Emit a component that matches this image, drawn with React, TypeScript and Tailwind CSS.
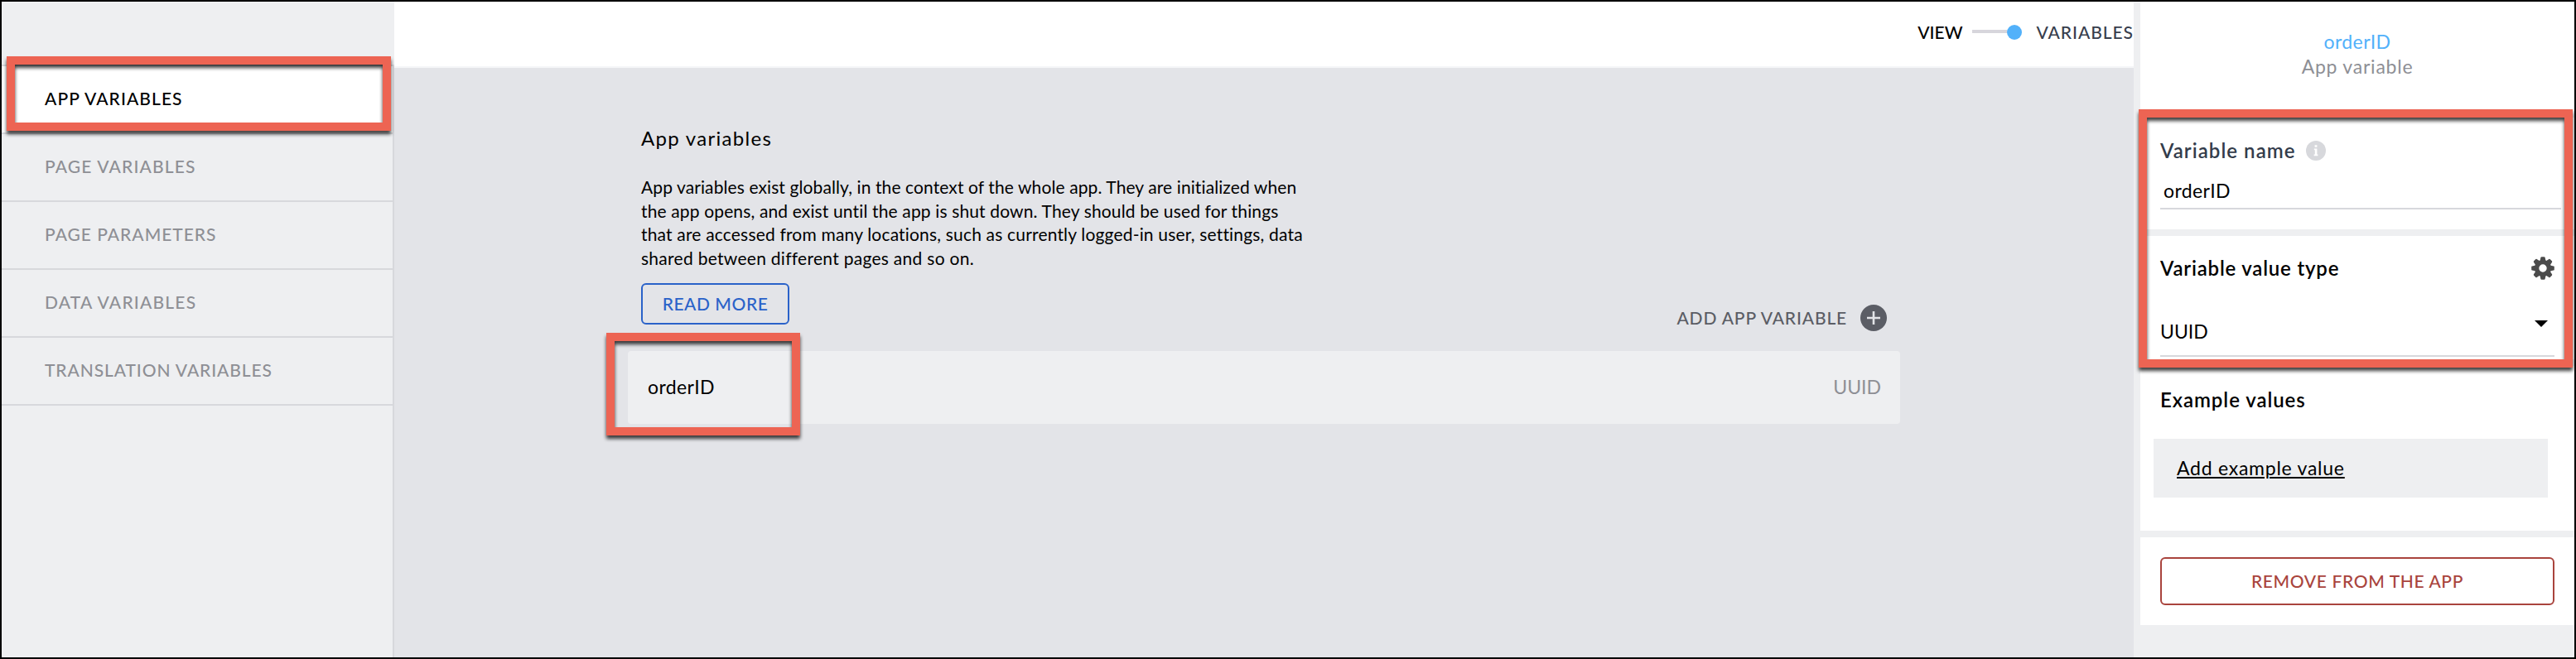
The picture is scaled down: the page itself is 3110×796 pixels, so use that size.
type NavItem = { label: string; tracking: string; active?: boolean };

const navItems: NavItem[] = [
  { label: "APP VARIABLES", tracking: "tracking-[1.07px]", active: true },
  { label: "PAGE VARIABLES", tracking: "tracking-[1.15px]" },
  { label: "PAGE PARAMETERS", tracking: "tracking-[0.98px]" },
  { label: "DATA VARIABLES", tracking: "tracking-[1.2px]" },
  { label: "TRANSLATION VARIABLES", tracking: "tracking-[0.9px]" },
];

function Highlight({ className }: { className: string }) {
  return (
    <div
      className={`pointer-events-none absolute border-[10px] border-[#ed6453] [filter:drop-shadow(0_4px_2px_rgba(0,0,0,0.75))] ${className}`}
    />
  );
}

function Sidebar() {
  return (
    <nav className="flex w-[474px] shrink-0 flex-col bg-[#eeeff1]">
      <div className="h-[76px] shrink-0" />
      <div className="flex flex-1 flex-col border-r-2 border-t-2 border-[#d7d8dc]">
        {navItems.map((item) => (
          <div
            key={item.label}
            className={`flex h-[82px] shrink-0 items-center border-b-2 border-[#d7d8dc] pb-[2px] pl-[52px] text-[21px] font-medium ${item.tracking} ${
              item.active ? "bg-white text-black" : "text-[#8e8f95]"
            }`}
          >
            {item.label}
          </div>
        ))}
      </div>
    </nav>
  );
}

function ViewSwitch() {
  return (
    <header className="flex h-20 shrink-0 items-center justify-end border-b-2 border-[#f5f6f8] bg-white pb-1 text-[21px] font-medium leading-[28px]">
      <span className="text-black">VIEW</span>
      <span className="ml-[12px] flex items-center">
        <span className="-mt-[2px] h-1 w-[42px] bg-[#d7d6dc]" />
        <span className="size-[18px] rounded-full bg-[#52b1fa]" />
      </span>
      <span className="ml-[17px] tracking-[0.95px] text-[#383e4d]">VARIABLES</span>
    </header>
  );
}

function PlusCircle() {
  return (
    <svg className="size-8" viewBox="0 0 32 32" fill="none">
      <circle cx="16" cy="16" r="16" fill="#5b5d65" />
      <path d="M16 8v16M8 16h16" stroke="#e3e4e8" strokeWidth="2.6" />
    </svg>
  );
}

function Gear() {
  const teeth = [0, 45, 90, 135, 180, 225, 270, 315];
  return (
    <svg className="size-7" viewBox="0 0 28 28" fill="none">
      <circle cx="14" cy="14" r="7.4" stroke="#4b4b4b" strokeWidth="5.4" />
      {teeth.map((angle) => (
        <path
          key={angle}
          d="M10.4 5.5 11.4 1Q11.6 .2 12.4 .2H15.6Q16.4 .2 16.6 1L17.6 5.5Z"
          fill="#4b4b4b"
          transform={`rotate(${angle} 14 14)`}
        />
      ))}
    </svg>
  );
}

function InfoDot() {
  return (
    <svg className="size-6" viewBox="0 0 24 24">
      <circle cx="12" cy="12" r="12" fill="#d7d8dc" />
      <path d="M10.6 5.2h2.8v2.6h-2.8zM9.8 9.6h3.6v7h1v1.6H9.6v-1.6h1.2v-5.4h-1z" fill="#fff" />
    </svg>
  );
}

function Content() {
  return (
    <main className="flex flex-1 flex-col bg-[#e3e4e8] pl-[282px] pt-[71px] text-black">
      <div className="flex w-[1536px] flex-col">
        <div className="flex flex-col px-4">
          <h1 className="h-7 text-[24px] leading-[28px] tracking-[1.3px]">App variables</h1>
          <p className="mt-[31px] flex h-[114px] flex-col whitespace-nowrap text-[21px] leading-[28.6px]">
            <span className="tracking-[0.1px]">
              App variables exist globally, in the context of the whole app. They are initialized when
            </span>
            <span className="tracking-[0.14px]">
              the app opens, and exist until the app is shut down. They should be used for things
            </span>
            <span className="tracking-[0.18px]">
              that are accessed from many locations, such as currently logged-in user, settings, data
            </span>
            <span className="tracking-[0.28px]">shared between different pages and so on.</span>
          </p>
          <div className="mt-4 flex h-[58px] items-start justify-between">
            <button className="h-[50px] w-[179px] rounded-md border-2 border-[#2a62c9] text-[21px] font-medium tracking-[0.55px] text-[#2a62c9]">
              READ MORE
            </button>
            <div className="flex items-center gap-4 self-end text-[21px] font-medium tracking-[0.84px] text-[#5b5d65]">
              ADD APP VARIABLE
              <PlusCircle />
            </div>
          </div>
        </div>
        <div className="mt-6 flex h-[88px] items-center justify-between rounded bg-[#eeeff1] pb-[2px] pl-6 pr-[23px] text-[23px]">
          <span className="tracking-[0.4px]">orderID</span>
          <span className="text-[#8e8f95]">UUID</span>
        </div>
      </div>
    </main>
  );
}

function Inspector() {
  return (
    <aside className="flex w-[532px] shrink-0 flex-col gap-2 bg-[#eeeff1] pl-2 text-black">
      <section className="flex h-[132px] flex-col items-center bg-white pt-[33px] text-[23px] leading-[30px]">
        <span className="tracking-[0.4px] text-[#52b1fa]">orderID</span>
        <span className="tracking-[0.77px] text-[#8e8f95]">App variable</span>
      </section>

      <section className="h-[135px] bg-white pl-6 pr-4 pt-[28px]">
        <div className="flex h-6 items-center gap-[12px] text-[24px] font-semibold leading-6 tracking-[1.05px] text-[#333c4b]">
          Variable name
          <InfoDot />
        </div>
        <div className="mt-[22px] border-b-2 border-[#d7d8dc] pb-[7px] pl-1 text-[23px] leading-7 tracking-[0.4px]">
          orderID
        </div>
      </section>

      <section className="h-[149px] bg-white px-6 pt-[25px]">
        <div className="flex h-7 items-center justify-between text-[24px] font-semibold leading-7 tracking-[0.8px]">
          Variable value type
          <Gear />
        </div>
        <div className="mt-12 flex justify-between border-b-2 border-[#d7d8dc] pb-[15px] pr-2 text-[23px] leading-7">
          UUID
          <svg className="mt-px h-2 w-4" viewBox="0 0 16 8">
            <path d="M0 0h16L8 8z" fill="#000" />
          </svg>
        </div>
      </section>

      <section className="h-[199px] bg-white pl-4 pr-8 pt-[27px]">
        <h2 className="pl-2 text-[24px] font-semibold leading-7 tracking-[0.95px]">Example values</h2>
        <div className="mt-[33px] flex h-[71px] items-center bg-[#eeeff1] pl-7 text-[23px] tracking-[0.75px]">
          <span className="underline decoration-2 underline-offset-2">Add example value</span>
        </div>
      </section>

      <section className="h-[106px] bg-white px-6 pt-6">
        <button className="h-[58px] w-full rounded-md border-2 border-[#a9443d] text-[21px] font-medium tracking-[0.63px] text-[#a9443d]">
          REMOVE FROM THE APP
        </button>
      </section>
    </aside>
  );
}

export default function App() {
  return (
    <div className="relative flex h-[796px] w-[3110px] overflow-hidden border-2 border-black bg-[#eeeff1] font-[Lato,sans-serif]">
      <Sidebar />
      <div className="flex flex-1 flex-col">
        <ViewSwitch />
        <Content />
      </div>
      <Inspector />
      <Highlight className="left-[6px] top-[66px] h-[90px] w-[464px]" />
      <Highlight className="left-[730px] top-[400px] h-[124px] w-[234px]" />
      <Highlight className="left-[2580px] top-[130px] h-[312px] w-[524px]" />
    </div>
  );
}
